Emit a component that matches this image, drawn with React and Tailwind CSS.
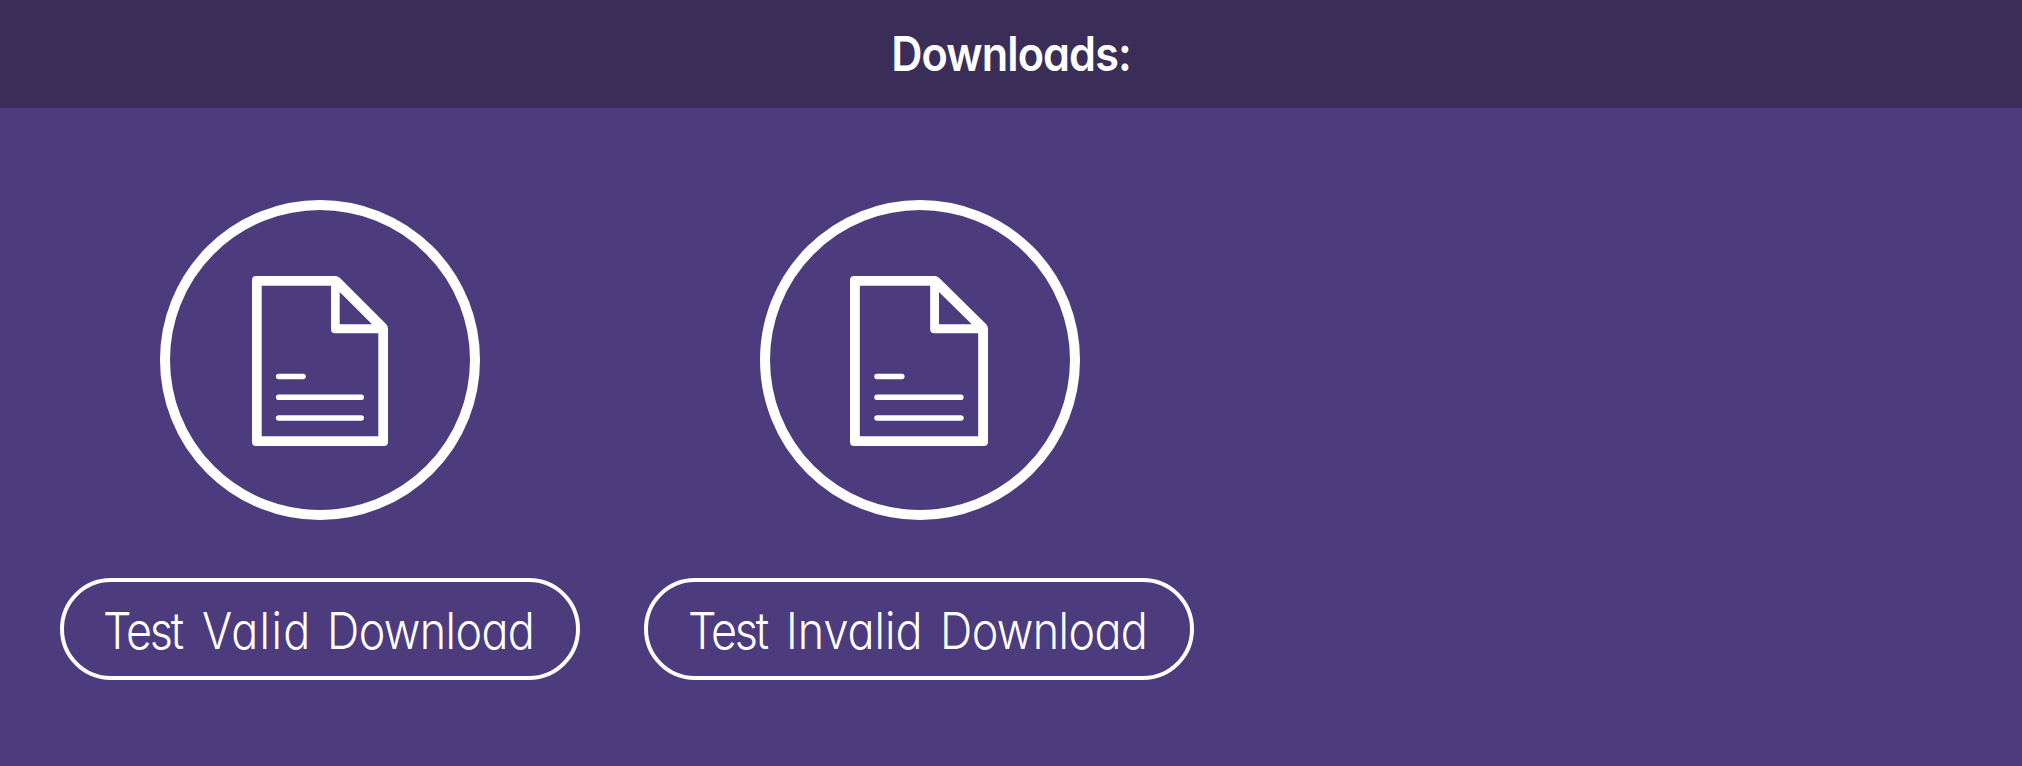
const face = "font-['Inter','Lato',sans-serif] [font-feature-settings:'cv11'] whitespace-nowrap text-white";

function DocumentIcon({ left }) {
  const w = 388 - left;
  return (
    <svg width="320" height="320" viewBox="0 0 320 320" fill="none" stroke="white" aria-hidden="true">
      <circle cx="160" cy="160" r="155" strokeWidth="10" />
      <g transform={`translate(${left - 160} 76) scale(${w / 136} 1)`}>
        <path
          fill="white"
          stroke="none"
          fillRule="evenodd"
          d="M4 0H83.500Q86 0 88 2L134 48Q136 50 136 52.500V166Q136 170 132 170H4Q0 170 0 166V4Q0 0 4 0ZM9.700 9.800V160.200H126.300V57.200H83Q79 57.200 79 53.200V9.800ZM87.700 16V48.200H120Z"
        />
        <path strokeWidth="5.600" strokeLinecap="round" d="M26.700 100.500H51M26.700 121.200H109.200M26.700 142H109.200" />
      </g>
    </svg>
  );
}

function Word({ className, children }) {
  return (
    <span className={`block ${className}`}>
      <span className="inline-block origin-left scale-x-[0.88]">{children}</span>
    </span>
  );
}

function Download({ iconLeft, className, children }) {
  return (
    <div className="flex w-[600px] shrink-0 flex-col items-center">
      <DocumentIcon left={iconLeft} />
      <a
        className={`${face} ${className} mt-[58px] flex h-[102px] rounded-full border-4 border-white pt-[2px] text-[51px] leading-[94px] font-light`}
      >
        {children}
      </a>
    </div>
  );
}

export default function App() {
  return (
    <div className="flex h-[766px] w-full flex-col overflow-hidden bg-[#4d3c7d]">
      <header className="flex h-[108px] items-center justify-center bg-[#3a2e58]">
        <h1 className={`${face} scale-x-[0.9] text-[48px] font-semibold tracking-[-1px]`}>Downloads:</h1>
      </header>
      <main className="flex pt-[92px] pl-5">
        <Download iconLeft={252} className="w-[520px] pl-[39px]">
          <Word className="w-[99px] tracking-[-2.4px]">Test</Word>
          <Word className="w-[125px] tracking-[1.5px]">Valid</Word>
          <Word className="w-[206px] tracking-[-0.7px]">Download</Word>
        </Download>
        <Download iconLeft={250} className="mr-[2px] w-[550px] pl-[40px]">
          <Word className="w-[98px] tracking-[-2.4px]">Test</Word>
          <Word className="w-[154px] tracking-[0px]">Invalid</Word>
          <Word className="w-[206px] tracking-[-0.7px]">Download</Word>
        </Download>
      </main>
    </div>
  );
}
